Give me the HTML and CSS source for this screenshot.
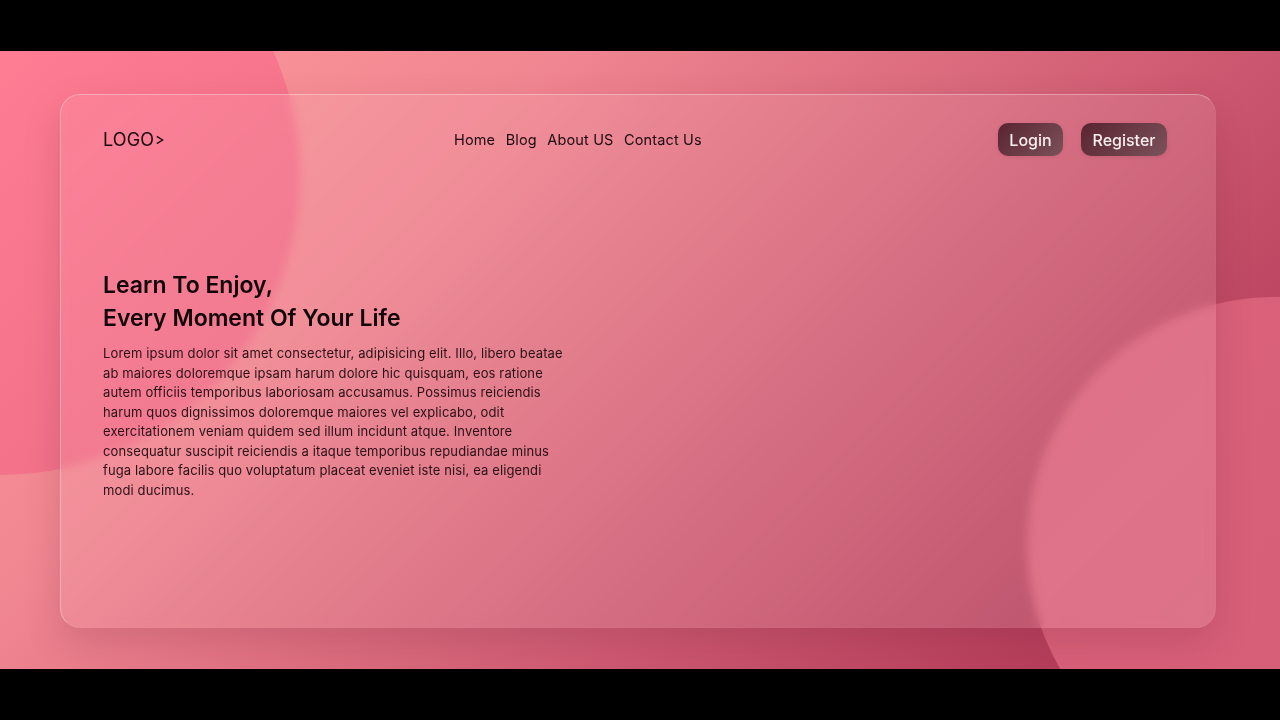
FILE: index.html
```html
<!DOCTYPE html>
<html lang="en">
<head>
<meta charset="utf-8">
<title>Glass landing</title>
<link rel="stylesheet" href="styles.css">
</head>
<body>
<main class="scene">
  <div class="blob blob-left"></div>
  <div class="blob blob-right"></div>
  <section class="glass">
    <header class="topbar">
      <a class="logo">LOGO<svg class="chev" viewBox="0 0 8 10" width="8" height="10"><path d="M.8 1.4 6.6 5 .8 8.6" fill="none" stroke="#1d0a10" stroke-width="1.4"/></svg></a>
      <nav class="nav">
        <a>Home</a><a>Blog</a><a>About US</a><a>Contact Us</a>
      </nav>
      <div class="actions">
        <button class="btn btn-login">Login</button>
        <button class="btn btn-register">Register</button>
      </div>
    </header>
    <div class="hero">
      <h1>Learn To Enjoy,<br>Every Moment Of Your Life</h1>
      <p>Lorem ipsum dolor sit amet consectetur, adipisicing elit. Illo, libero beatae<br>ab maiores doloremque ipsam harum dolore hic quisquam, eos ratione<br>autem officiis temporibus laboriosam accusamus. Possimus reiciendis<br>harum quos dignissimos doloremque maiores vel explicabo, odit<br>exercitationem veniam quidem sed illum incidunt atque. Inventore<br>consequatur suscipit reiciendis a itaque temporibus repudiandae minus<br>fuga labore facilis quo voluptatum placeat eveniet iste nisi, ea eligendi<br>modi ducimus.</p>
    </div>
  </section>
</main>
</body>
</html>
```
FILE: styles.css
```css
* { box-sizing: border-box; }
html, body { margin: 0; height: 100%; background: #000; overflow: hidden; }
body { display: flex; align-items: center; font-family: Inter, "Liberation Sans", sans-serif; color: #1d0a10; }
.scene {
  position: relative; width: 1280px; height: 618px; overflow: hidden;
  display: flex; padding: 43px 64px 41px 60px;
  background: linear-gradient(135deg, #ff9a9c 0%, #f08691 30%, #ca556e 68%, #a9304f 100%);
}
.blob { position: absolute; border-radius: 50%; }
.blob-left {
  left: -300px; top: -176px; width: 600px; height: 600px;
  background: linear-gradient(135deg, #ff7d93 40%, #ec6c85 100%);
}
.blob-right {
  left: 1027px; top: 246px; width: 496px; height: 496px;
  background: linear-gradient(135deg, #dc627b, #d45d76);
}
.glass {
  position: relative; flex: 1; border-radius: 20px;
  padding: 28px 49px 0 42px;
  background: linear-gradient(135deg, rgba(255,255,255,.06), rgba(255,255,255,.12));
  border: 1px solid rgba(255,255,255,.3);
  border-right-color: rgba(255,255,255,.06); border-bottom-color: rgba(255,255,255,.04);
  backdrop-filter: blur(5px);
  box-shadow: 0 14px 36px rgba(90,20,40,.17);
}
.topbar { display: grid; grid-template-columns: 351px 1fr auto; align-items: center; height: 33px; }
.logo { display: flex; align-items: center; gap: 2px; font-size: 18px; font-weight: 400; letter-spacing: .1px; }
.nav { display: flex; gap: 10.5px; font-size: 14.5px; letter-spacing: .14px; }
.actions { display: flex; gap: 18px; margin-right: -1px; }
.btn {
  height: 33px; border: 0; border-radius: 10px; color: #fbeef0;
  font: 500 16px Inter, "Liberation Sans", sans-serif;
  background: linear-gradient(135deg, #582430 0%, #7c525a 100%);
  box-shadow: 0 1px 4px rgba(80,20,40,.12);
}
.btn-login { width: 65px; }
.btn-register { width: 86px; }
.hero { margin-top: 113px; }
h1 { margin: 0; font-size: 23px; font-weight: 600; line-height: 33px; color: #12060a; }
p { margin: 9px 0 0; font-size: 13px; line-height: 19.5px; letter-spacing: .12px; color: #2a1016; white-space: nowrap; }
```
